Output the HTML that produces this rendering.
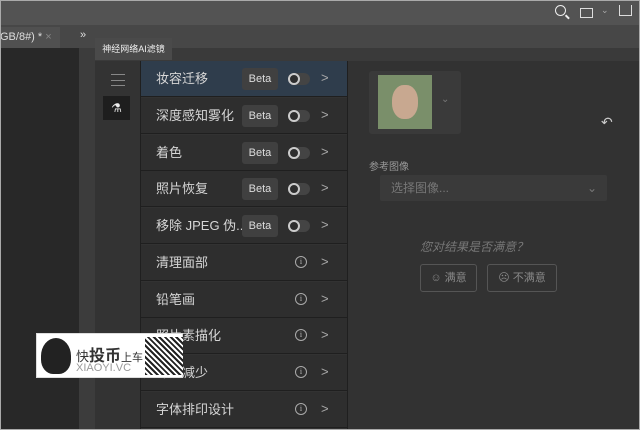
<!DOCTYPE html><html><head><meta charset="utf-8"><style>
*{margin:0;padding:0;box-sizing:border-box}
body{width:640px;height:430px;overflow:hidden;background:#323232;font-family:"Liberation Sans","Noto Sans CJK SC",sans-serif;position:relative;color:#ccc}
.a{position:absolute}
.row{position:absolute;left:141px;width:206px;height:36px;background:#2e2e2e;border-bottom:1px solid #1f1f1f}
.row .t{position:absolute;left:15px;top:0;line-height:35px;font-size:13px;color:#d6d6d6}
.beta{position:absolute;left:101px;top:7px;width:36px;height:22px;background:#404040;border-radius:3px;font-size:11px;color:#ddd;text-align:center;line-height:22px}
.tog{position:absolute;left:147px;top:12px;width:22px;height:12px;border-radius:6px;background:#444}
.tog:before{content:"";position:absolute;left:0;top:0;width:12px;height:12px;border-radius:50%;border:2px solid #ccc;box-sizing:border-box;background:#2e2e2e}
.ch{position:absolute;left:180px;top:0;line-height:34px;font-size:13px;color:#aaa}
.inf{position:absolute;left:154px;top:11px;width:12px;height:12px;border:1px solid #aaa;border-radius:50%;font-size:8px;text-align:center;line-height:10px;color:#bbb;font-family:"Liberation Serif",serif}
</style></head><body>
<div class="a" style="left:0;top:0;width:640px;height:25px;background:#535353"></div>
<div class="a" style="left:0;top:25px;width:640px;height:23px;background:#474747"></div>
<div class="a" style="left:0;top:27px;width:60px;height:21px;background:#505050;font-size:11px;color:#ddd;line-height:21px">GB/8#) * <span style="color:#888">×</span></div>
<div class="a" style="left:80px;top:29px;font-size:11px;color:#ddd">»</div>
<div class="a" style="left:0;top:48px;width:79px;height:382px;background:#282828"></div>
<div class="a" style="left:79px;top:48px;width:16px;height:382px;background:#3c3c3c"></div>
<div class="a" style="left:95px;top:48px;width:545px;height:13px;background:#3a3a3a"></div>
<div class="a" style="left:95px;top:38px;width:77px;height:22px;background:#4a4a4a;font-size:9px;color:#eee;line-height:22px;text-align:center">神经网络AI滤镜</div>
<div class="a" style="left:95px;top:61px;width:46px;height:369px;background:#333"></div>
<div class="a" style="left:111px;top:74px;width:14px;height:12px;border-top:1px solid #888;border-bottom:1px solid #888"><div style="margin-top:5px;border-top:1px solid #888"></div></div>
<div class="a" style="left:103px;top:96px;width:27px;height:24px;background:#1e1e1e;color:#eee;font-size:12px;text-align:center;line-height:24px">⚗</div>
<div class="a" style="left:140px;top:61px;width:1px;height:369px;background:#1f1f1f"></div>
<div class="row" style="top:61px;background:#2f3d4c"><span class="t">妆容迁移</span><span class="beta">Beta</span><span class="tog"></span><span class="ch">&gt;</span></div>
<div class="row" style="top:98px"><span class="t">深度感知雾化</span><span class="beta">Beta</span><span class="tog"></span><span class="ch">&gt;</span></div>
<div class="row" style="top:135px"><span class="t">着色</span><span class="beta">Beta</span><span class="tog"></span><span class="ch">&gt;</span></div>
<div class="row" style="top:171px"><span class="t">照片恢复</span><span class="beta">Beta</span><span class="tog"></span><span class="ch">&gt;</span></div>
<div class="row" style="top:208px"><span class="t">移除 JPEG 伪...</span><span class="beta">Beta</span><span class="tog"></span><span class="ch">&gt;</span></div>
<div class="row" style="top:245px"><span class="t">清理面部</span><span class="inf">i</span><span class="ch">&gt;</span></div>
<div class="row" style="top:282px"><span class="t">铅笔画</span><span class="inf">i</span><span class="ch">&gt;</span></div>
<div class="row" style="top:318px"><span class="t">照片素描化</span><span class="inf">i</span><span class="ch">&gt;</span></div>
<div class="row" style="top:355px"><span class="t">噪点减少</span><span class="inf">i</span><span class="ch">&gt;</span></div>
<div class="row" style="top:392px"><span class="t">字体排印设计</span><span class="inf">i</span><span class="ch">&gt;</span></div>
<div class="a" style="left:347px;top:61px;width:1px;height:369px;background:#1f1f1f"></div>
<div class="a" style="left:369px;top:71px;width:92px;height:63px;background:#3a3a3a;border-radius:3px"></div>
<div class="a" style="left:378px;top:75px;width:54px;height:54px;background:#7a8f6a"><div style="margin:10px 14px;width:26px;height:34px;border-radius:45%;background:#c8a890"></div></div>
<div class="a" style="left:441px;top:94px;font-size:10px;color:#777">⌄</div>
<div class="a" style="left:601px;top:114px;font-size:14px;color:#ccc">↶</div>
<div class="a" style="left:369px;top:158px;font-size:10px;color:#999">参考图像</div>
<div class="a" style="left:380px;top:175px;width:227px;height:26px;background:#3a3a3a;border-radius:2px;font-size:12px;color:#777;line-height:26px;padding-left:11px">选择图像...<span style="float:right;margin-right:10px">⌄</span></div>
<div class="a" style="left:420px;top:238px;font-size:12px;color:#777;font-style:italic">您对结果是否满意？</div>
<div class="a" style="left:420px;top:264px;width:57px;height:28px;border:1px solid #555;border-radius:3px;font-size:11px;color:#888;line-height:26px;text-align:center">☺ 满意</div>
<div class="a" style="left:487px;top:264px;width:70px;height:28px;border:1px solid #555;border-radius:3px;font-size:11px;color:#888;line-height:26px;text-align:center">☹ 不满意</div>
<div class="a" style="left:555px;top:5px;width:11px;height:11px;border:1.5px solid #eee;border-radius:50%"></div>
<div class="a" style="left:565px;top:16px;width:5px;height:1.5px;background:#eee;transform:rotate(45deg)"></div>
<div class="a" style="left:580px;top:8px;width:13px;height:10px;border:1.5px solid #ddd"></div>
<div class="a" style="left:601px;top:5px;font-size:9px;color:#aaa">⌄</div>
<div class="a" style="left:619px;top:5px;width:13px;height:11px;border:1.5px solid #ddd;border-top:none"></div>
<div class="a" style="left:36px;top:333px;width:147px;height:45px;background:#fff;border:1px solid #ddd"><div class="a" style="left:4px;top:4px;width:30px;height:36px;background:#222;border-radius:50% 50% 40% 40%"></div><div class="a" style="left:39px;top:8px;font-size:13px;color:#333">快<b style="font-size:16px">投币</b><span style="font-size:11px">上车</span></div><div class="a" style="left:39px;top:28px;font-size:11px;color:#999">XIAOYI.VC</div><div class="a" style="left:108px;top:3px;width:38px;height:38px;background:repeating-linear-gradient(45deg,#222 0 2px,#fff 2px 4px)"></div></div>
<div class="a" style="left:0;top:0;width:640px;height:430px;border:1px solid #aaa"></div>
</body></html>
